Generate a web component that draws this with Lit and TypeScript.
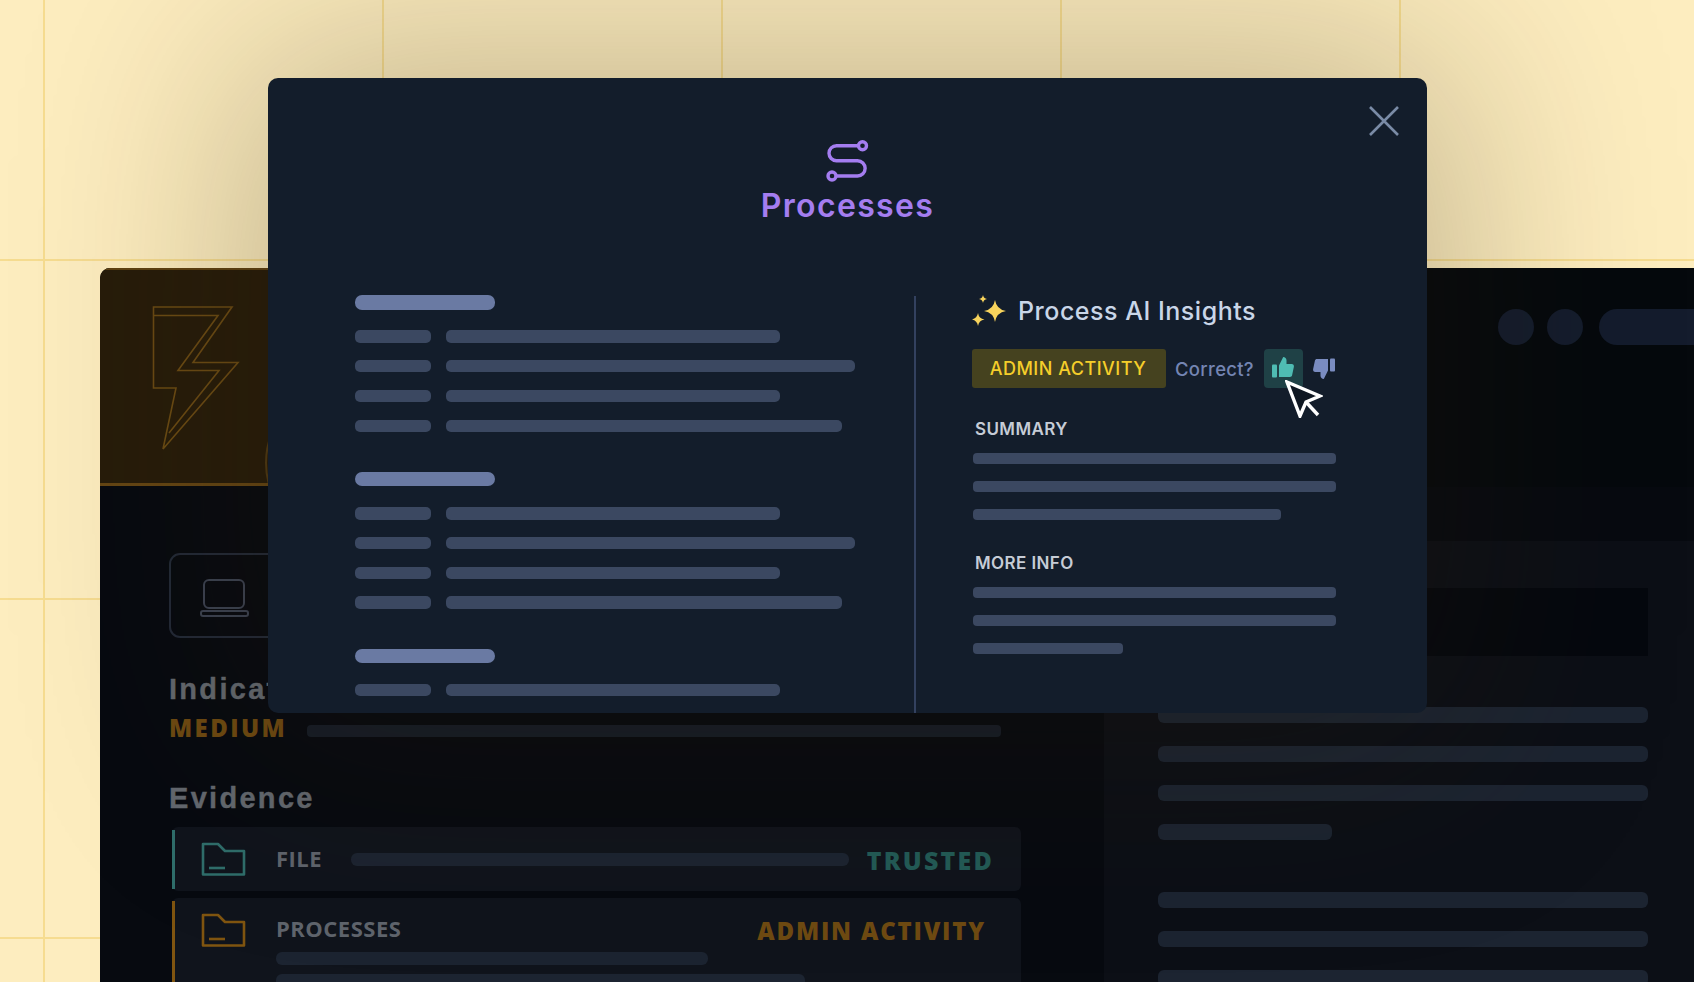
import { LitElement, html, css, svg } from "lit";
import { customElement } from "lit/decorators.js";

// width of each skeleton row's value bar, per group
const GROUPS = [
  [334, 409, 334, 396],
  [334, 409, 334, 396],
  [334, 409, 334, 396],
];

const star = (cx: number, cy: number, r: number) => {
  const k = r * 0.14;
  return `M${cx} ${cy - r}Q${cx + k} ${cy - k} ${cx + r} ${cy}Q${cx + k} ${cy + k} ${cx} ${cy + r}Q${cx - k} ${cy + k} ${cx - r} ${cy}Q${cx - k} ${cy - k} ${cx} ${cy - r}Z`;
};

const folder = svg`
  <path d="M2 2h15l7 7h19v23.5H2z" fill="none" stroke="currentColor" stroke-width="2.6" stroke-linejoin="round"/>
  <path d="M8 26h16" fill="none" stroke="currentColor" stroke-width="2.6"/>`;

const thumb = svg`
  <rect x="1" y="9.5" width="5" height="13" rx="1"/>
  <path d="M8 22V10.5l4.2-8.5c1.8 0 3.3 1.4 3.3 3.2V9h5.2c1.5 0 2.5 1.3 2.2 2.7l-1.8 8.6c-.2 1-1.1 1.7-2.1 1.7z"/>`;

@customElement("app-root")
export class AppRoot extends LitElement {
  static styles = css`
    :host {
      display: block;
      position: relative;
      width: 1694px;
      height: 982px;
      overflow: hidden;
      background-color: #fdedbf;
      background-image:
        linear-gradient(90deg, #f6dc90 2px, transparent 2px),
        linear-gradient(#f6dc90 2px, transparent 2px);
      background-size: 339px 339px;
      background-position: 43px 259px;
      font-family: Inter, "Liberation Sans", sans-serif;
    }

    /* back window */
    .window {
      position: absolute;
      left: 100px;
      top: 268px;
      width: 1640px;
      height: 760px;
      display: flex;
      background: #070a10;
      border-radius: 10px 0 0 0;
      overflow: hidden;
    }
    .left {
      width: 1004px;
      flex: none;
    }
    .hero {
      height: 218px;
      box-sizing: border-box;
      position: relative;
      background: #271c0a;
      border-top: 2px solid #5f4212;
      border-bottom: 3px solid #654614;
      overflow: hidden;
    }
    .bolt {
      position: absolute;
      left: 50px;
      top: 32px;
    }
    .hero-ring {
      position: absolute;
      left: 165px;
      top: 111px;
      width: 160px;
      height: 160px;
      border: 2px solid #4f3a14;
      border-radius: 50%;
    }
    .left-body {
      padding: 67px 0 0 69px;
    }
    .tile {
      width: 150px;
      height: 85px;
      box-sizing: border-box;
      border: 2px solid #232a38;
      border-radius: 11px;
      padding: 23px 0 0 29px;
      color: #3c4352;
    }
    .tile svg {
      display: block;
    }
    .big {
      font-family: "Liberation Sans", sans-serif;
      font-weight: 700;
      font-size: 29px;
      line-height: 34px;
      letter-spacing: 2.3px;
      color: #63686f;
      -webkit-text-stroke: 0.4px #63686f;
    }
    .indicators {
      margin-top: 34px;
    }
    .severity {
      display: flex;
      align-items: center;
      gap: 22px;
      margin-top: 6px;
      height: 30px;
    }
    .severity span {
      font-family: "Open Sans", sans-serif;
      font-weight: 800;
      font-size: 24px;
      letter-spacing: 2.4px;
      color: #6e4a12;
      width: 116px;
      flex: none;
    }
    .severity i {
      display: block;
      width: 694px;
      height: 12px;
      margin-top: 8px;
      border-radius: 4px;
      background: #161c27;
    }
    .evidence {
      margin-top: 39px;
    }
    .card {
      position: relative;
      width: 849px;
      margin: 12px 0 0 3px;
      background: #10141c;
      border-radius: 6px;
      box-sizing: border-box;
      padding-left: 29px;
      display: flex;
    }
    .card::before {
      content: "";
      position: absolute;
      left: 0;
      top: 3px;
      bottom: 2px;
      width: 3px;
      background: var(--accent);
    }
    .card.teal {
      --accent: #2f6e6b;
      height: 64px;
      align-items: center;
    }
    .card.amber {
      --accent: #805510;
      height: 120px;
      margin-top: 7px;
      padding-top: 15px;
    }
    .folder {
      flex: none;
      color: var(--accent);
    }
    .card-label {
      font-family: "Open Sans", sans-serif;
      font-weight: 700;
      font-size: 22px;
      line-height: 30px;
      letter-spacing: 0.5px;
      color: #5f646c;
    }
    .card-bar {
      height: 13px;
      border-radius: 6px;
      background: #1c2431;
    }
    .file-row {
      display: flex;
      align-items: center;
      margin-left: 29px;
      flex: 1;
    }
    .file-row .card-label {
      margin-top: -2px;
    }
    .file-row .card-bar {
      width: 498px;
      margin-left: 29px;
    }
    .status {
      font-family: "Open Sans", sans-serif;
      font-weight: 800;
      font-size: 25px;
      letter-spacing: 2.2px;
      color: #235b57;
      margin-left: auto;
      margin-right: 27px;
      padding-top: 2px;
    }
    .proc {
      flex: 1;
      margin-left: 29px;
      padding-right: 35px;
    }
    .proc-head {
      display: flex;
      justify-content: space-between;
      align-items: flex-start;
    }
    .proc-head .status {
      color: #6e4a12;
      margin: 0;
      font-size: 24px;
      line-height: 36px;
      height: 30px;
      padding: 0;
      letter-spacing: 1.8px;
    }
    .proc .card-bar {
      margin-top: 9px;
    }

    .right {
      flex: 1;
      background: #0c0f16;
    }
    .right-top {
      height: 219px;
      box-sizing: border-box;
      background: #05090d;
      display: flex;
      gap: 13px;
      padding: 41px 0 0 394px;
    }
    .dot {
      width: 36px;
      height: 36px;
      border-radius: 50%;
      background: #141c2d;
    }
    .pill {
      width: 200px;
      height: 36px;
      margin-left: 3px;
      border-radius: 18px;
      background: #141c2d;
    }
    .right-strip {
      height: 54px;
      background: #070a10;
    }
    .right-body {
      width: 490px;
      margin-left: 54px;
      padding-top: 47px;
    }
    .dark-band {
      height: 68px;
      background: #05080e;
      margin-bottom: 51px;
    }
    .skel {
      height: 16px;
      border-radius: 6px;
      background: #1c2431;
      margin-bottom: 23px;
    }
    .skel.gap {
      margin-bottom: 52px;
    }

    /* modal on top */
    .modal {
      position: absolute;
      left: 268px;
      top: 78px;
      width: 1159px;
      height: 635px;
      background: #131d2b;
      border-radius: 10px;
      box-shadow: 0 0 220px 30px rgba(40, 30, 10, 0.27);
      overflow: hidden;
    }
    .close {
      position: absolute;
      right: 28px;
      top: 28px;
      display: block;
    }
    .modal-head {
      height: 217px;
      box-sizing: border-box;
      padding-top: 62px;
      display: flex;
      flex-direction: column;
      align-items: center;
    }
    .modal-head h1 {
      margin: 5px 0 0;
      font-size: 32px;
      line-height: 38px;
      font-weight: 600;
      letter-spacing: 1.35px;
      color: #a47df0;
    }
    .modal-body {
      display: flex;
      padding-left: 87px;
    }
    .list {
      width: 559px;
      flex: none;
      display: flex;
      flex-direction: column;
      gap: 40px;
    }
    .group {
      display: flex;
      flex-direction: column;
      gap: 17.4px;
    }
    .group-title {
      width: 140px;
      height: 14.5px;
      border-radius: 7px;
      background: #6a7aa3;
      margin-bottom: 3.6px;
    }
    .row {
      display: flex;
      gap: 15px;
    }
    .row i {
      display: block;
      height: 12.3px;
      border-radius: 5px;
      background: #3b4861;
    }
    .row i:first-child {
      width: 76px;
    }
    .insights {
      flex: 1;
      height: 500px;
      margin-top: 1px;
      box-sizing: border-box;
      border-left: 2px solid #33415f;
      padding-left: 57px;
    }
    .ins-title {
      display: flex;
      align-items: center;
      gap: 12px;
      height: 30px;
      font-size: 25px;
      font-weight: 500;
      letter-spacing: 0.52px;
      color: #c9d6e8;
    }
    .ins-title svg {
      margin-left: -1px;
    }
    .verdict {
      display: flex;
      align-items: center;
      margin-top: 23px;
      margin-left: -1px;
      position: relative;
    }
    .badge {
      height: 39px;
      width: 194px;
      box-sizing: border-box;
      padding-right: 2px;
      display: flex;
      align-items: center;
      justify-content: center;
      border-radius: 3px;
      background: #45421f;
      color: #f5ce2a;
      font-size: 18px;
      font-weight: 500;
      letter-spacing: 0.5px;
    }
    .correct {
      margin-left: 9px;
      font-size: 18.5px;
      font-weight: 500;
      letter-spacing: 0.3px;
      color: #7485b3;
    }
    .vote {
      width: 39px;
      height: 39px;
      margin-left: 10px;
      border-radius: 4px;
      background: #1f4146;
      display: flex;
      align-items: center;
      justify-content: center;
      color: #4fbcb3;
    }
    .vote svg {
      margin-top: -3px;
    }
    .vote-down {
      margin-left: 9px;
      color: #7a8cc0;
      display: block;
      transform: rotate(180deg);
    }
    .cursor {
      position: absolute;
      left: 313px;
      top: 31px;
      display: block;
    }
    .section {
      margin-top: 31px;
      display: flex;
      flex-direction: column;
    }
    .section + .section {
      margin-top: 16px;
    }
    .section h2 {
      margin: 0 0 14px;
      padding-left: 2px;
      font-size: 17px;
      line-height: 20px;
      font-weight: 600;
      letter-spacing: 0.4px;
      color: #c6ccd6;
    }
    .section i {
      display: block;
      height: 11px;
      border-radius: 4px;
      background: #3b4861;
      margin-bottom: 17px;
    }
  `;

  private renderGroup(widths: number[]) {
    return html`
      <div class="group">
        <div class="group-title"></div>
        ${widths.map(
          (w) => html`
            <div class="row"><i></i><i style="width:${w}px"></i></div>
          `,
        )}
      </div>
    `;
  }

  private renderWindow() {
    return html`
      <div class="window">
        <div class="left">
          <div class="hero">
            <svg class="bolt" width="100" height="155" viewBox="0 0 100 155" fill="none" stroke="#6b4b14" stroke-width="1.6">
              <path d="M3.5 5H82L43 60.5H88L13 147L26 86H3.5Z" />
              <path d="M3.5 13.5H68L28 68.5H69L19 131" />
            </svg>
            <div class="hero-ring"></div>
          </div>
          <div class="left-body">
            <div class="tile">
              <svg width="50" height="40" viewBox="0 0 50 40" fill="none" stroke="currentColor" stroke-width="2">
                <rect x="4" y="2" width="40" height="28" rx="5" />
                <rect x="1" y="33" width="47" height="5" rx="2" />
              </svg>
            </div>
            <div class="big indicators">Indicators</div>
            <div class="severity"><span>MEDIUM</span><i></i></div>
            <div class="big evidence">Evidence</div>
            <div class="card teal">
              <svg class="folder" width="46" height="35" viewBox="0 0 46 35">${folder}</svg>
              <div class="file-row">
                <span class="card-label">FILE</span>
                <div class="card-bar"></div>
                <span class="status">TRUSTED</span>
              </div>
            </div>
            <div class="card amber">
              <svg class="folder" width="46" height="35" viewBox="0 0 46 35">${folder}</svg>
              <div class="proc">
                <div class="proc-head">
                  <span class="card-label">PROCESSES</span>
                  <span class="status">ADMIN ACTIVITY</span>
                </div>
                <div class="card-bar" style="width:432px"></div>
                <div class="card-bar" style="width:529px"></div>
              </div>
            </div>
          </div>
        </div>
        <div class="right">
          <div class="right-top">
            <div class="dot"></div>
            <div class="dot"></div>
            <div class="pill"></div>
          </div>
          <div class="right-strip"></div>
          <div class="right-body">
            <div class="dark-band"></div>
            <div class="skel"></div>
            <div class="skel"></div>
            <div class="skel"></div>
            <div class="skel gap" style="width:174px"></div>
            <div class="skel"></div>
            <div class="skel"></div>
            <div class="skel"></div>
          </div>
        </div>
      </div>
    `;
  }

  private renderInsights() {
    return html`
      <div class="insights">
        <div class="ins-title">
          <svg width="34" height="32" viewBox="0 0 34 32" fill="#f7d35c">
            <path d="${star(23, 16, 11)}" />
            <path d="${star(11, 4, 4)}" />
            <path d="${star(6, 24.5, 6.5)}" />
          </svg>
          Process AI Insights
        </div>
        <div class="verdict">
          <div class="badge">ADMIN ACTIVITY</div>
          <span class="correct">Correct?</span>
          <div class="vote">
            <svg width="24" height="24" viewBox="0 0 24 24" fill="currentColor">${thumb}</svg>
          </div>
          <svg class="vote-down" width="24" height="24" viewBox="0 0 24 24" fill="currentColor">${thumb}</svg>
          <svg class="cursor" width="38" height="38" viewBox="0 0 38 38" fill="#0f1722" stroke="#fff" stroke-width="3.4" stroke-linejoin="miter">
            <path d="M2 2L35 16L21 22L15 36Z" />
            <path d="M21 22L33 35" fill="none" />
          </svg>
        </div>
        <div class="section">
          <h2>SUMMARY</h2>
          <i style="width:363px"></i>
          <i style="width:363px"></i>
          <i style="width:308px"></i>
        </div>
        <div class="section">
          <h2>MORE INFO</h2>
          <i style="width:363px"></i>
          <i style="width:363px"></i>
          <i style="width:150px"></i>
        </div>
      </div>
    `;
  }

  render() {
    return html`
      ${this.renderWindow()}
      <div class="modal">
        <svg class="close" width="30" height="30" viewBox="0 0 30 30" stroke="#7a8ba6" stroke-width="2.6">
          <path d="M1 1L29 29M29 1L1 29" />
        </svg>
        <div class="modal-head">
          <svg width="44" height="42" viewBox="0 0 44 42" fill="none" stroke="#a47df0" stroke-width="3.4">
            <circle cx="36.5" cy="5.7" r="4" />
            <circle cx="6" cy="36" r="4" />
            <path d="M32 5.7H10.5a7.5 7.5 0 0 0 0 15H31.5a7.65 7.65 0 0 1 0 15.3H10.5" />
          </svg>
          <h1>Processes</h1>
        </div>
        <div class="modal-body">
          <div class="list">${GROUPS.map((g) => this.renderGroup(g))}</div>
          ${this.renderInsights()}
        </div>
      </div>
    `;
  }
}
